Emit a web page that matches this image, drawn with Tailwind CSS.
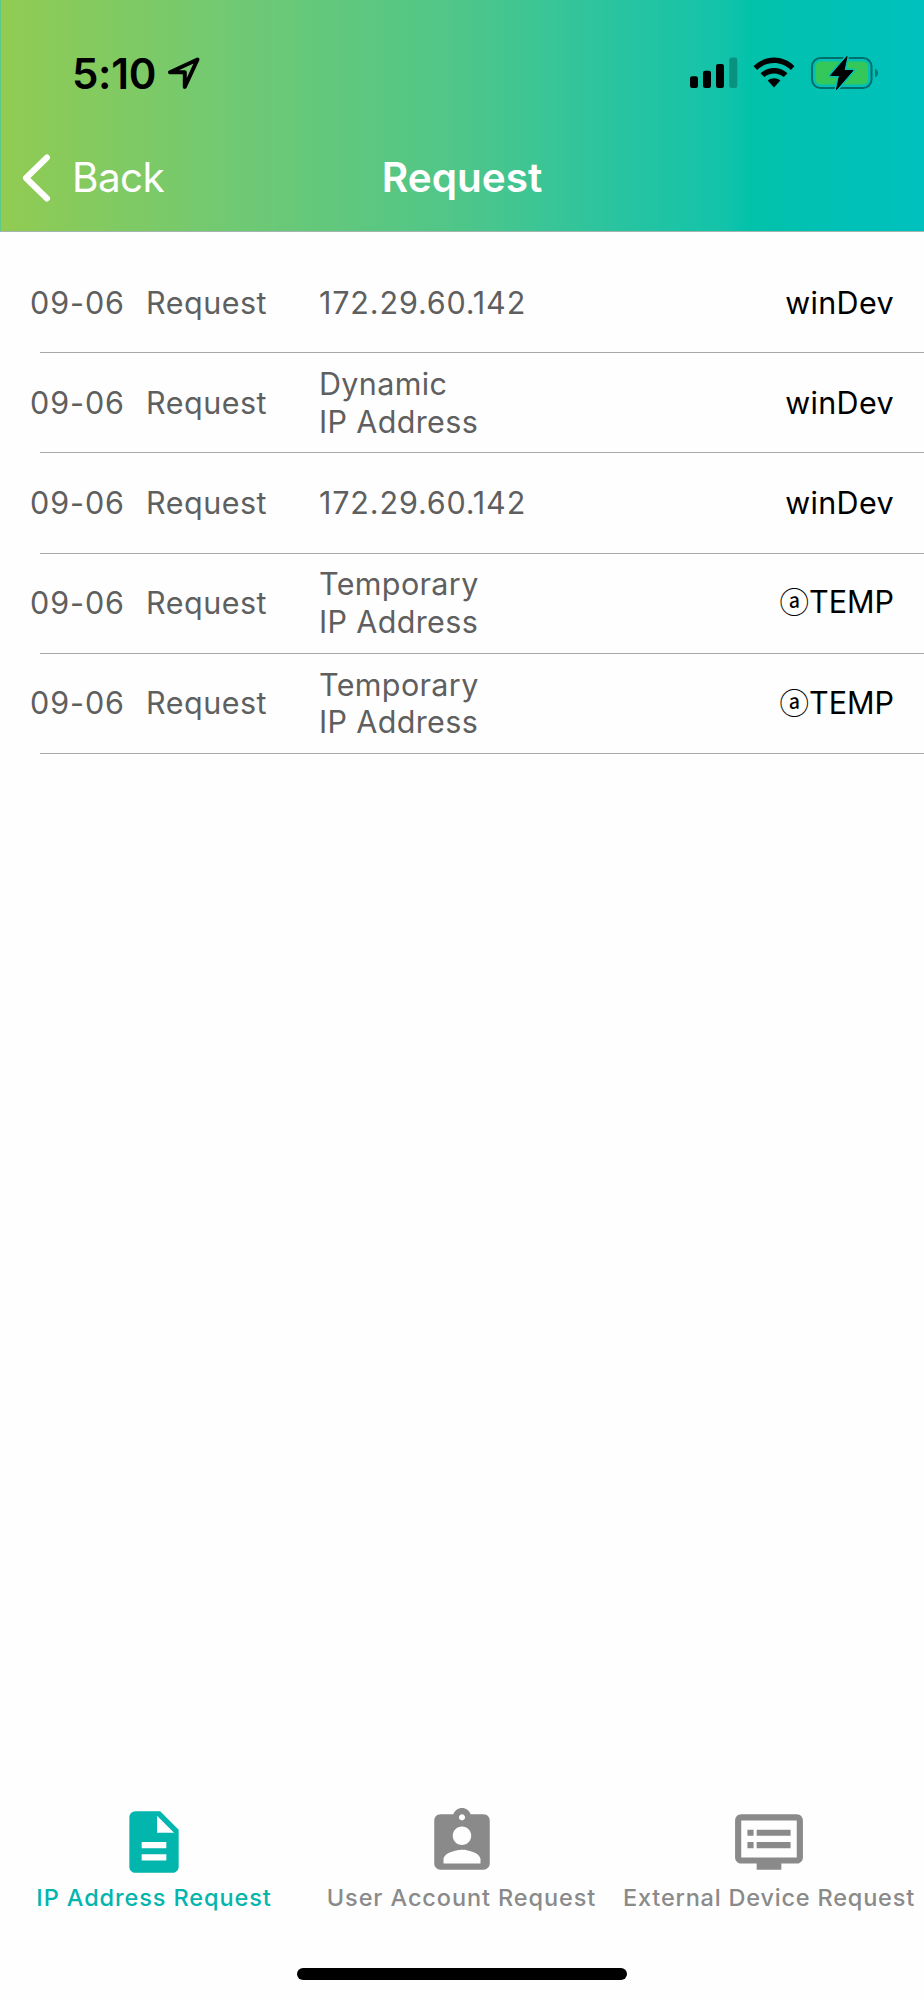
<!DOCTYPE html>
<html lang="en">
<head>
    <meta charset="UTF-8">
    <meta name="viewport" content="width=device-width, initial-scale=1.0">
    <title>Request</title>
    <script src="https://cdn.jsdelivr.net/npm/@tailwindcss/browser@4"></script>
</head>
<body class="bg-[#fefefe] font-['Inter','Noto_Sans_CJK_JP',sans-serif] flex flex-col w-[924px] h-[2000px] overflow-hidden">

    <header class="h-[232px] shrink-0 flex flex-col border-b border-[#a3b5ae] bg-[linear-gradient(90deg,#5fc887_0px,#5fc887_1px,#91cb52_1px,#70c973_235px,#4ec689_462px,#2dc49e_600px,#12c3aa_726px,#02c2aa_750px,#00c1b4_830px,#00c1be_924px)]">
        <!-- Status bar -->
        <div class="h-[146px] pt-[48px] pl-[72px] pr-[45px] flex items-start">
            <span class="text-[42px] leading-[50px] mt-px font-semibold tracking-[-0.3px]">5:10</span>
            <svg class="w-[34px] h-[34px] mt-[8px] ml-[11px]" viewBox="0 0 34 34" fill="none" stroke="#000" stroke-width="4" stroke-linejoin="round">
                <path d="M30.5 3.5L3 16.3H17.8V31Z"/>
            </svg>
            <div class="ml-auto flex items-start mt-[9px]">
                <svg class="w-[48px] h-[32px]" viewBox="0 0 48 32">
                    <rect x="0" y="19.3" width="8" height="11.7" rx="2.2"/>
                    <rect x="13" y="13.7" width="8" height="17.3" rx="2.2"/>
                    <rect x="26" y="7" width="8" height="24" rx="2.2"/>
                    <rect x="39.3" y="0.5" width="8" height="30.5" rx="2.2" fill-opacity=".25"/>
                </svg>
                <svg class="w-[42px] h-[32px] ml-[15px]" viewBox="0 0 42 32">
                    <path d="M0.6 9.2C12 -2.3 30 -2.3 41.4 9.2L37.8 13C28.5 3.8 13.5 3.8 4.2 13Z"/>
                    <path d="M7.5 16.3C15 9.2 27 9.2 34.5 16.3L30.7 20.1C25.3 15.2 16.7 15.2 11.3 20.1Z"/>
                    <path d="M14.7 23.6C18.3 20.6 23.7 20.6 27.3 23.6L21 30.5Z"/>
                </svg>
                <svg class="w-[68px] h-[34px] ml-[16px] -mt-px" viewBox="0 0 68 34">
                    <rect x="1" y="2" width="59.5" height="30" rx="8.5" fill="none" stroke="#006f6c" stroke-width="2"/>
                    <rect x="4.5" y="5.5" width="52.5" height="23" rx="5" fill="#34c759"/>
                    <path d="M64 12.5C68 14.5 68 19.5 64 21.5Z" fill="#007a74"/>
                    <path d="M36 0.5L19.5 19.5H28.5L25.5 33.5L42 14.5H33Z" stroke="#02c1b4" stroke-width="4" stroke-linejoin="round"/>
                    <path d="M36 0.5L19.5 19.5H28.5L25.5 33.5L42 14.5H33Z" stroke="#000" stroke-width="1" stroke-linejoin="round"/>
                </svg>
            </div>
        </div>
        <!-- Navigation bar -->
        <nav class="h-[64px] grid grid-cols-3 items-center text-white text-[40.5px] leading-[50px]">
            <a class="flex items-center pl-[22px]">
                <svg class="w-[30px] h-[48px]" viewBox="0 0 30 48" fill="none" stroke="#fff" stroke-width="6" stroke-linecap="round" stroke-linejoin="round">
                    <path d="M25 3.5L4 24L25 44.5"/>
                </svg>
                <span class="ml-[20px] tracking-[-0.6px]">Back</span>
            </a>
            <h1 class="text-center font-semibold">Request</h1>
        </nav>
    </header>

    <main class="flex-grow pt-[20px] text-[30.5px] leading-[37.5px] tracking-[0.35px] text-[#5f5f5f]">
        <div class="h-[100px] flex items-center pl-[30px] pr-[30px] pt-px">
            <span class="w-[116px] tracking-[0.9px]">09-06</span>
            <span class="w-[173px] tracking-[0.5px]">Request</span>
            <span class="flex-grow tracking-[0.85px]">172.29.60.142</span>
            <span class="text-black">winDev</span>
        </div>
        <div class="h-px ml-[40px] bg-[#a8a8a8]"></div>
        <div class="h-[99.3px] flex items-center pl-[30px] pr-[30px]">
            <span class="w-[116px] tracking-[0.9px]">09-06</span>
            <span class="w-[173px] tracking-[0.5px]">Request</span>
            <span class="flex-grow">Dynamic<br>IP Address</span>
            <span class="text-black">winDev</span>
        </div>
        <div class="h-px ml-[40px] bg-[#a8a8a8]"></div>
        <div class="h-[99.3px] flex items-center pl-[30px] pr-[30px] pb-px">
            <span class="w-[116px] tracking-[0.9px]">09-06</span>
            <span class="w-[173px] tracking-[0.5px]">Request</span>
            <span class="flex-grow tracking-[0.85px]">172.29.60.142</span>
            <span class="text-black">winDev</span>
        </div>
        <div class="h-px ml-[40px] bg-[#a8a8a8]"></div>
        <div class="h-[99.3px] flex items-center pl-[30px] pr-[30px] pb-px">
            <span class="w-[116px] tracking-[0.9px]">09-06</span>
            <span class="w-[173px] tracking-[0.5px]">Request</span>
            <span class="flex-grow">Temporary<br>IP Address</span>
            <span class="text-black tracking-normal"><span class="text-[29.5px]">ⓐ</span>TEMP</span>
        </div>
        <div class="h-px ml-[40px] bg-[#a8a8a8]"></div>
        <div class="h-[99.3px] flex items-center pl-[30px] pr-[30px] pb-px">
            <span class="w-[116px] tracking-[0.9px]">09-06</span>
            <span class="w-[173px] tracking-[0.5px]">Request</span>
            <span class="flex-grow">Temporary<br>IP Address</span>
            <span class="text-black tracking-normal"><span class="text-[29.5px]">ⓐ</span>TEMP</span>
        </div>
        <div class="h-px ml-[40px] bg-[#a8a8a8]"></div>
    </main>

    <!-- Tab bar -->
    <footer class="h-[195px] shrink-0 flex flex-col items-center">
        <div class="w-full grid grid-cols-3 text-[23.5px] leading-[30px] tracking-[0.9px] font-medium text-[#8a8a8a] whitespace-nowrap">
            <a class="flex flex-col items-center text-[#02b5ad]">
                <svg class="w-[74px] h-[74px]" viewBox="0 0 24 24" fill="currentColor">
                    <path d="M14 2H6c-1.1 0-1.99.9-1.99 2L4 20c0 1.1.89 2 1.99 2H18c1.1 0 2-.9 2-2V8l-6-6zm2 16H8v-2h8v2zm0-4H8v-2h8v2zm-3-5V3.5L18.5 9H13z"/>
                </svg>
                <span class="mt-[4px]">IP Address Request</span>
            </a>
            <a class="flex flex-col items-center pr-px">
                <svg class="w-[74px] h-[74px]" viewBox="0 0 24 24" fill="currentColor">
                    <path d="M19 3h-4.18C14.4 1.84 13.3 1 12 1c-1.3 0-2.4.84-2.82 2H5c-1.1 0-2 .9-2 2v14c0 1.1.9 2 2 2h14c1.1 0 2-.9 2-2V5c0-1.1-.9-2-2-2zm-7 0c.55 0 1 .45 1 1s-.45 1-1 1-1-.45-1-1 .45-1 1-1zm0 4c1.66 0 3 1.34 3 3s-1.34 3-3 3-3-1.34-3-3 1.34-3 3-3zm6 12H6v-1.4c0-2 4-3.1 6-3.1s6 1.1 6 3.1V19z"/>
                </svg>
                <span class="mt-[4px]">User Account Request</span>
            </a>
            <a class="flex flex-col items-center pr-[2px]">
                <svg class="w-[74px] h-[74px]" viewBox="0 0 24 24" fill="currentColor">
                    <path d="M21 3H3c-1.1 0-2 .9-2 2v12c0 1.1.9 2 2 2h5v2h8v-2h5c1.1 0 2-.9 2-2V5c0-1.1-.9-2-2-2zm0 14H3V5h18v12zM19 8H8v2h11V8zm0 4H8v2h11v-2zM7 8H5v2h2V8zm0 4H5v2h2v-2z"/>
                </svg>
                <span class="mt-[4px] tracking-[0.8px]">External Device Request</span>
            </a>
        </div>
        <div class="w-[330px] h-[12px] mt-[55px] rounded-full bg-black"></div>
    </footer>

</body>
</html>
